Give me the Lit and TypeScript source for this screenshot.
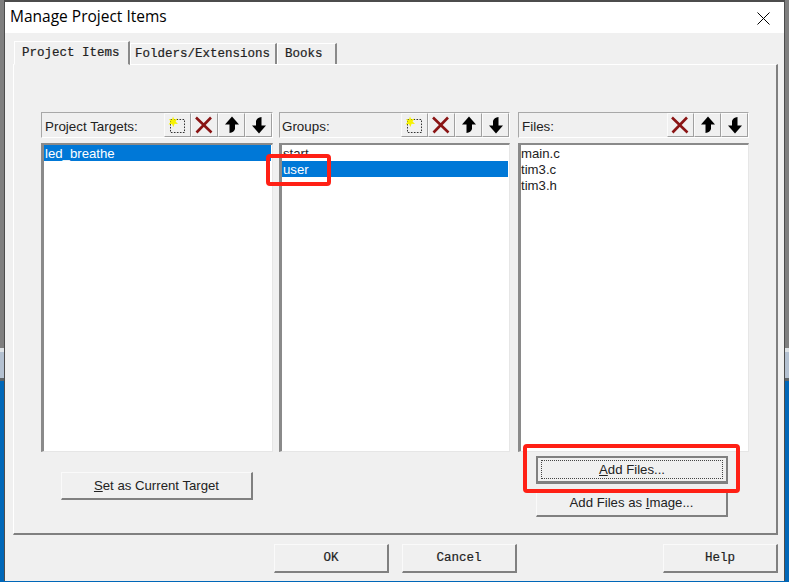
import { LitElement, html, css, svg } from "lit";
import { customElement } from "lit/decorators.js";

const newIcon = svg`<svg class="ico" viewBox="0 0 24 20" width="24" height="20">
  <rect x="4.5" y="4.5" width="14" height="13" fill="none" stroke="#333" stroke-dasharray="1.6 1.4"/>
  <path d="M7 1.5 L8.2 4.6 L11.5 3.6 L9.6 6.6 L12 9 L8.6 8.8 L7.4 12 L6 9 L2.6 9.6 L4.6 6.8 L3 4 L6 4.8Z" fill="#f6f200"/>
</svg>`;
const delIcon = svg`<svg class="ico" viewBox="0 0 24 20" width="24" height="20">
  <path d="M3 2.5 L18.5 17.5 M18 2.5 L3.5 17.5" fill="none" stroke="#8a1414" stroke-width="2.6"/>
</svg>`;
const upIcon = svg`<svg class="ico" viewBox="0 0 24 20" width="24" height="20">
  <path d="M12 1.5 L19 9.5 L15 9.5 L15 14 Q14 17.5 9.5 18 L9.5 9.5 L5 9.5Z" fill="#000"/>
</svg>`;
const downIcon = svg`<svg class="ico" viewBox="0 0 24 20" width="24" height="20">
  <path d="M12 18.5 L5 10.5 L9 10.5 L9 6 Q10 2.5 14.5 2 L14.5 10.5 L19 10.5Z" fill="#000"/>
</svg>`;
const closeIcon = svg`<svg viewBox="0 0 13 13" width="13" height="13">
  <path d="M0.5 0.5 L12.5 12.5 M12.5 0.5 L0.5 12.5" stroke="#000" stroke-width="1" fill="none"/>
</svg>`;

interface Panel { title: string; icons: unknown[]; items: string[]; selected: number; }

const panels: Panel[] = [
  { title: "Project Targets:", icons: [newIcon, delIcon, upIcon, downIcon], items: ["led_breathe"], selected: 0 },
  { title: "Groups:", icons: [newIcon, delIcon, upIcon, downIcon], items: ["start", "user"], selected: 1 },
  { title: "Files:", icons: [delIcon, upIcon, downIcon], items: ["main.c", "tim3.c", "tim3.h"], selected: -1 },
];

@customElement("app-root")
export class AppRoot extends LitElement {
  static styles = css`
    :host {
      display: block;
      position: relative;
      width: 789px;
      height: 582px;
      overflow: hidden;
      background: linear-gradient(
        to bottom,
        #7f7f7f 0 348px,
        #dfe3e6 348px 352px,
        #b4c1d1 352px 378px,
        #5f6468 378px 381px,
        #0067b8 381px
      );
      font-family: "Liberation Sans", Arial, sans-serif;
      color: #222;
    }
    .window {
      box-sizing: border-box;
      width: 781px;
      height: 581px;
      margin-left: 4px;
      border: 1px solid #4c4c4c;
      border-width: 2px 1px 0 1px;
      background: #f0f0f0;
      display: flex;
      flex-direction: column;
    }
    .titlebar {
      height: 31px;
      flex: none;
      background: #fff;
      display: flex;
      align-items: center;
      justify-content: space-between;
      padding: 0 14px 0 5px;
      font-family: "Open Sans", "Noto Sans", sans-serif;
      font-size: 15.5px;
      color: #000;
    }
    .titlebar .t { margin-top: -3px; }
    .close { display: flex; margin-top: 1px; }
    .client {
      flex: 1;
      padding: 8px 6px 0 8px;
      display: flex;
      flex-direction: column;
    }
    .tabs {
      display: flex;
      align-items: flex-end;
      height: 24px;
      padding-left: 1px;
      font-family: "Liberation Mono", "DejaVu Sans Mono", monospace;
      font-size: 12.5px;
      -webkit-text-stroke: 0.2px #222;
      color: #222;
      position: relative;
      z-index: 1;
    }
    .tab {
      box-sizing: border-box;
      height: 21px;
      margin-bottom: 1px;
      border-top: 1px solid #fff;
      border-left: 1px solid #fff;
      border-right: 2px solid #8a8a8a;
      padding: 3px 0 0 4px;
      white-space: pre;
    }
    .tab.active {
      height: 24px;
      margin-bottom: 0;
      width: 116px;
      padding: 4px 0 0 7px;
      background: #f0f0f0;
      border-bottom: 1px solid #f0f0f0;
    }
    .tab.f { width: 147px; }
    .tab.b { width: 60px; padding-left: 7px; }
    .page {
      box-sizing: border-box;
      height: 471px;
      margin-top: -1px;
      border-top: 1px solid #fff;
      border-left: 1px solid #fff;
      border-right: 2px solid #808080;
      border-bottom: 2px solid #808080;
      padding: 47px 0 0 27px;
      flex: none;
    }
    .cols {
      display: grid;
      grid-template-columns: 232px 232px 232px;
      column-gap: 6px;
    }
    .second { width: 231px; }
    .third { margin-left: 1px; width: 231px; }
    .head {
      box-sizing: border-box;
      height: 26px;
      border: 1px solid;
      border-color: #a8a8a8 #fff #fff #a8a8a8;
      display: flex;
      align-items: center;
      justify-content: space-between;
      font-size: 13.4px;
      padding-left: 3px;
    }
    .second .head { padding-left: 2px; }
    .head .lbl { padding-top: 3px; }
    .tools { display: flex; height: 24px; }
    .tool {
      box-sizing: border-box;
      width: 27px;
      height: 24px;
      border: 1px solid;
      border-color: #fbfbfb #a0a0a0 #a0a0a0 #fbfbfb;
      display: flex;
      align-items: center;
      justify-content: center;
    }
    .ico { display: block; }
    .list {
      box-sizing: border-box;
      height: 309px;
      margin-top: 5px;
      background: #fff;
      border-style: solid;
      border-width: 2px 1px 1px 3px;
      border-color: #8a8a8a #e6e6e6 #e6e6e6 #8a8a8a;
      font-size: 13.2px;
      line-height: 17px;
    }
    .row { height: 16px; padding-left: 1px; margin-right: 1px; white-space: nowrap; }
    .third .row { padding-left: 0; }
    .row.sel { background: #0078d7; color: #fff; }
    .under-1 { padding: 20px 0 0 20px; }
    .under-3 {
      margin-left: 1px;
      padding: 4px 0 0 18px;
      display: flex;
      flex-direction: column;
      gap: 5px;
    }
    .btn {
      box-sizing: border-box;
      width: 192px;
      height: 28px;
      border: 1px solid;
      border-color: #fafafa #808080 #808080 #fafafa;
      border-right-width: 2px;
      border-bottom-width: 2px;
      display: flex;
      align-items: center;
      justify-content: center;
      font-size: 13.2px;
      padding-bottom: 1px;
    }
    .btn.def {
      border: 2px solid #808080;
      border-bottom-width: 3px;
      padding: 2px 3px;
    }
    .focus {
      flex: 1;
      align-self: stretch;
      border: 1px dotted #444;
      display: flex;
      align-items: center;
      justify-content: center;
    }
    .footer {
      display: flex;
      margin-top: 9px;
      font-family: "Liberation Mono", "DejaVu Sans Mono", monospace;
      font-size: 12.5px;
      -webkit-text-stroke: 0.2px #222;
      color: #222;
    }
    .fbtn {
      box-sizing: border-box;
      width: 115px;
      height: 29px;
      border: 1px solid;
      border-color: #fafafa #808080 #808080 #fafafa;
      border-right-width: 2px;
      border-bottom-width: 2px;
      display: flex;
      align-items: center;
      justify-content: center;
    }
    .ok { margin-left: 261px; }
    .cancel { margin-left: 13px; }
    .help { margin-left: auto; }
    .mark {
      position: absolute;
      box-sizing: border-box;
      border: 4px solid #ff2015;
      border-radius: 4px;
    }
    .mark.a { left: 266px; top: 154px; width: 65px; height: 32px; }
    .mark.b { left: 523px; top: 444px; width: 217px; height: 49px; }
  `;

  render() {
    return html`
      <div class="window">
        <div class="titlebar"><span class="t">Manage Project Items</span><span class="close">${closeIcon}</span></div>
        <div class="client">
          <div class="tabs">
            <div class="tab active">Project Items</div>
            <div class="tab f">Folders/Extensions</div>
            <div class="tab b">Books</div>
          </div>
          <div class="page">
            <div class="cols">
              ${panels.map((p, i) => html`
                <div class=${i === 2 ? "third" : i === 1 ? "second" : ""}>
                  <div class="head">
                    <span class="lbl">${p.title}</span>
                    <div class="tools">${p.icons.map((ic) => html`<div class="tool">${ic}</div>`)}</div>
                  </div>
                  <div class="list">
                    ${p.items.map((it, n) => html`<div class="row ${n === p.selected ? "sel" : ""}">${it}</div>`)}
                  </div>
                </div>
              `)}
              <div class="under-1"><div class="btn"><span><u>S</u>et as Current Target</span></div></div>
              <div></div>
              <div class="under-3">
                <div class="btn def"><div class="focus"><span><u>A</u>dd Files...</span></div></div>
                <div class="btn"><span>Add Files as <u>I</u>mage...</span></div>
              </div>
            </div>
          </div>
          <div class="footer">
            <div class="fbtn ok">OK</div>
            <div class="fbtn cancel">Cancel</div>
            <div class="fbtn help">Help</div>
          </div>
        </div>
      </div>
      <div class="mark a"></div>
      <div class="mark b"></div>
    `;
  }
}
